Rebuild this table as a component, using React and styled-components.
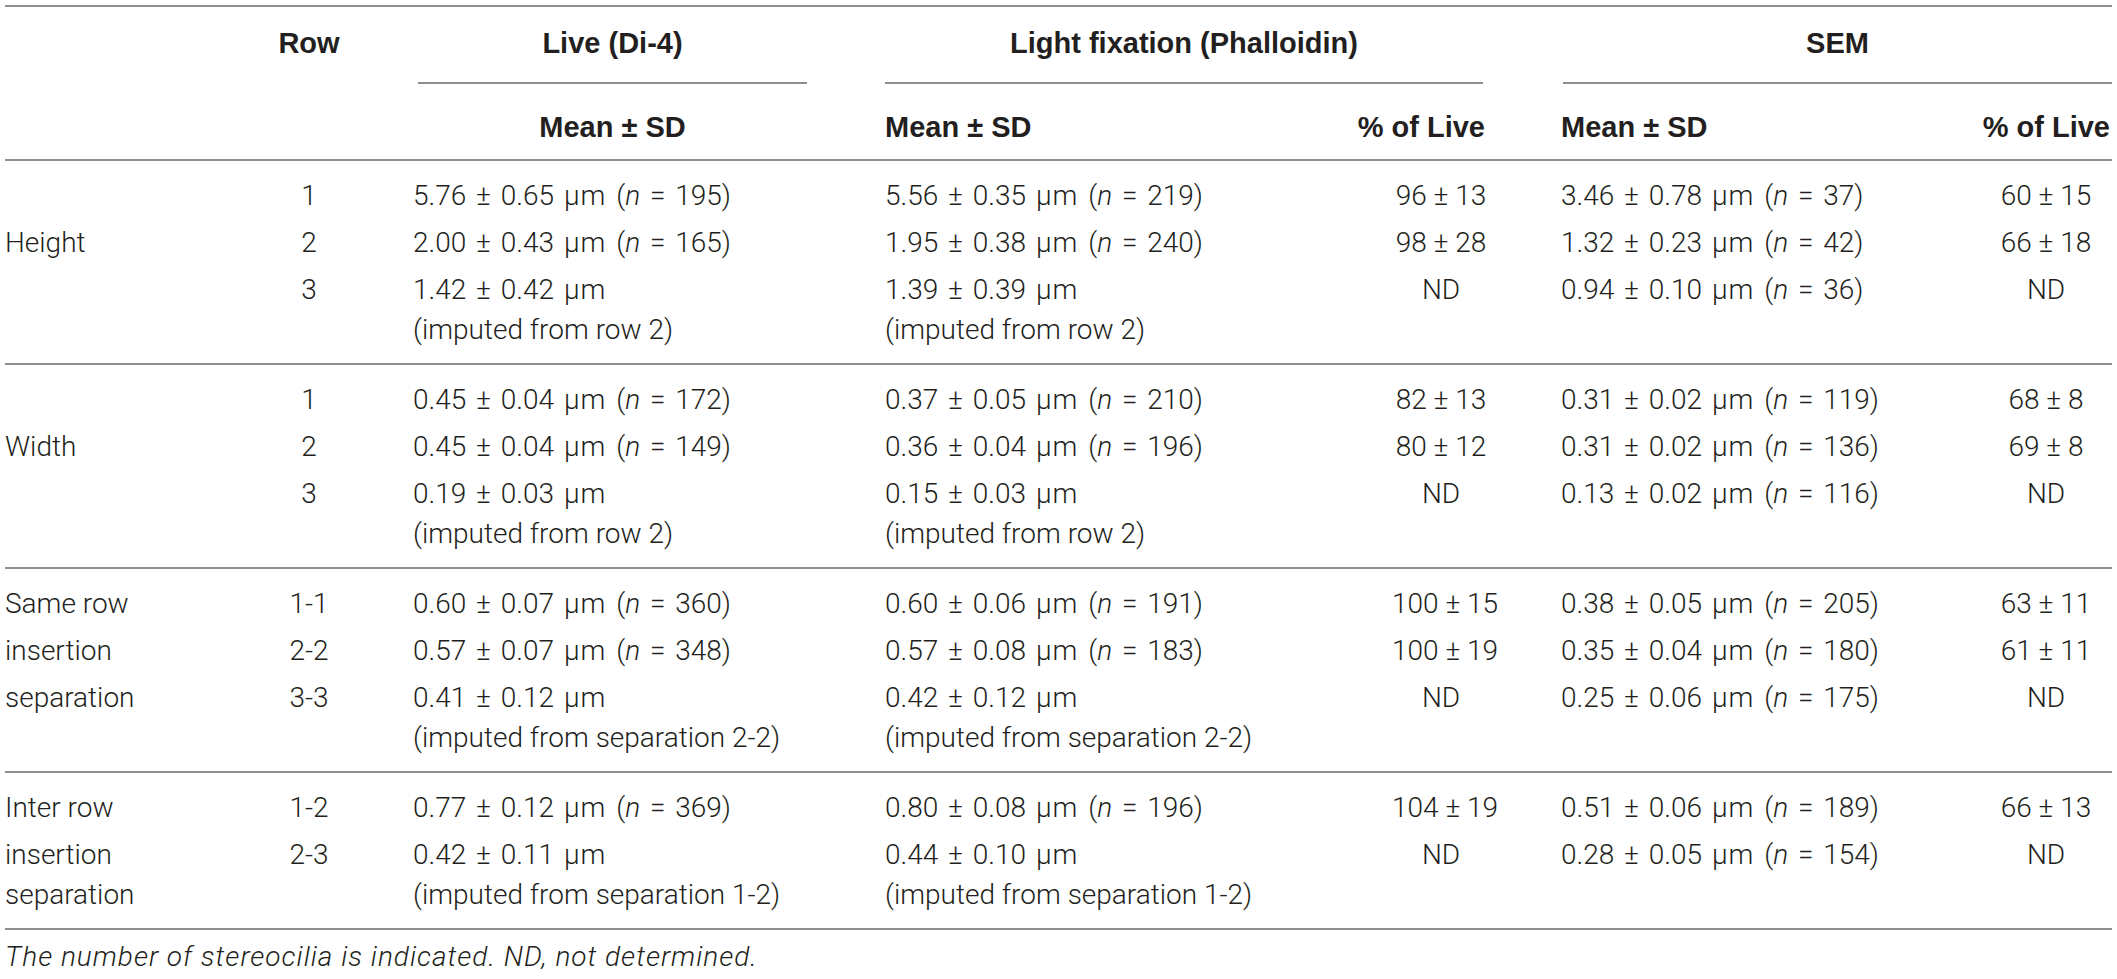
import React from 'react';
import styled, { createGlobalStyle } from 'styled-components';

const GlobalStyle = createGlobalStyle`
  html, body { margin: 0; padding: 0; background: #ffffff; }
  body {
    font-family: Roboto, "Liberation Sans", Arial, sans-serif;
    color: #231f20;
  }
`;

const COLS = '245px 118px 489px 483px 150px 485px 137px';
const RULE = '2px solid #8e8e8e';

const Page = styled.div`
  padding: 5px 5px 0 5px;
  width: 2107px;
`;

const Table = styled.div`
  border-top: ${RULE};
`;

const HeadRow = styled.div`
  display: grid;
  grid-template-columns: ${COLS};
  font-family: "Liberation Sans", Arial, sans-serif;
  font-size: 29px;
  font-weight: 700;
  line-height: 40px;
  padding: ${(p) => (p.$second ? '23px 0 12px' : '16px 0 0')};
  border-bottom: ${(p) => (p.$second ? RULE : 'none')};
`;

const HeadCell = styled.div`
  grid-column: ${(p) => p.$col} / span ${(p) => p.$span || 1};
  text-align: ${(p) => p.$align || 'left'};
  padding-left: ${(p) => p.$pl || 0}px;
  padding-right: ${(p) => p.$pr || 0}px;
  white-space: nowrap;
`;

const HeadGroup = styled.div`
  grid-column: ${(p) => p.$col} / span ${(p) => p.$span || 1};
  text-align: center;
  margin-left: ${(p) => p.$ml}px;
  margin-right: ${(p) => p.$mr}px;
  padding-bottom: 19px;
  border-bottom: ${RULE};
`;

const Group = styled.div`
  padding: 11px 0 10px;
  border-bottom: ${RULE};
`;

const Row = styled.div`
  display: grid;
  grid-template-columns: ${COLS};
  font-size: 28px;
  font-weight: 300;
  line-height: 40px;
  padding: 4px 0 3px;
`;

const Label = styled.div`
  white-space: pre-line;
`;

const RowNum = styled.div`
  text-align: center;
`;

const Value = styled.div`
  padding-left: ${(p) => p.$pl}px;
  white-space: nowrap;
`;

const MainLine = styled.span`
  word-spacing: 3px;
`;

const Mu = styled.span`
  letter-spacing: 1px;
`;

const Percent = styled.div`
  text-align: center;
  padding-left: ${(p) => p.$pl}px;
  white-space: nowrap;
`;

const Note = styled.p`
  margin: 0;
  padding-top: 7px;
  font-size: 28px;
  font-weight: 300;
  line-height: 40px;
  font-style: italic;
  letter-spacing: 1px;
`;

const m = (mean, sd, n) => ({ mean, sd, n });
const imp = (mean, sd, src) => ({ mean, sd, src });

const groups = [
  [
    { label: '', row: '1', live: m('5.76', '0.65', '195'), light: m('5.56', '0.35', '219'), lp: '96 ± 13', sem: m('3.46', '0.78', '37'), sp: '60 ± 15' },
    { label: 'Height', row: '2', live: m('2.00', '0.43', '165'), light: m('1.95', '0.38', '240'), lp: '98 ± 28', sem: m('1.32', '0.23', '42'), sp: '66 ± 18' },
    { label: '', row: '3', live: imp('1.42', '0.42', 'row 2'), light: imp('1.39', '0.39', 'row 2'), lp: 'ND', sem: m('0.94', '0.10', '36'), sp: 'ND' },
  ],
  [
    { label: '', row: '1', live: m('0.45', '0.04', '172'), light: m('0.37', '0.05', '210'), lp: '82 ± 13', sem: m('0.31', '0.02', '119'), sp: '68 ± 8' },
    { label: 'Width', row: '2', live: m('0.45', '0.04', '149'), light: m('0.36', '0.04', '196'), lp: '80 ± 12', sem: m('0.31', '0.02', '136'), sp: '69 ± 8' },
    { label: '', row: '3', live: imp('0.19', '0.03', 'row 2'), light: imp('0.15', '0.03', 'row 2'), lp: 'ND', sem: m('0.13', '0.02', '116'), sp: 'ND' },
  ],
  [
    { label: 'Same row', row: '1-1', live: m('0.60', '0.07', '360'), light: m('0.60', '0.06', '191'), lp: '100 ± 15', sem: m('0.38', '0.05', '205'), sp: '63 ± 11' },
    { label: 'insertion', row: '2-2', live: m('0.57', '0.07', '348'), light: m('0.57', '0.08', '183'), lp: '100 ± 19', sem: m('0.35', '0.04', '180'), sp: '61 ± 11' },
    { label: 'separation', row: '3-3', live: imp('0.41', '0.12', 'separation 2-2'), light: imp('0.42', '0.12', 'separation 2-2'), lp: 'ND', sem: m('0.25', '0.06', '175'), sp: 'ND' },
  ],
  [
    { label: 'Inter row', row: '1-2', live: m('0.77', '0.12', '369'), light: m('0.80', '0.08', '196'), lp: '104 ± 19', sem: m('0.51', '0.06', '189'), sp: '66 ± 13' },
    { label: 'insertion\nseparation', row: '2-3', live: imp('0.42', '0.11', 'separation 1-2'), light: imp('0.44', '0.10', 'separation 1-2'), lp: 'ND', sem: m('0.28', '0.05', '154'), sp: 'ND' },
  ],
];

function Measure({ v, pl }) {
  return (
    <Value $pl={pl}>
      <MainLine>
        {v.mean} ± {v.sd} <Mu>μm</Mu>
        {v.n ? (
          <>
            {' ('}
            <i>n</i>
            {' = '}
            {v.n})
          </>
        ) : null}
      </MainLine>
      {v.n ? null : (
        <>
          <br />
          (imputed from {v.src})
        </>
      )}
    </Value>
  );
}

export default function App() {
  return (
    <>
      <GlobalStyle />
      <Page>
        <Table>
          <HeadRow>
            <HeadCell $col={2} $align="center">Row</HeadCell>
            <HeadGroup $col={3} $ml={50} $mr={50}>Live (Di-4)</HeadGroup>
            <HeadGroup $col={4} $span={2} $ml={28} $mr={7}>Light fixation (Phalloidin)</HeadGroup>
            <HeadGroup $col={6} $span={2} $ml={73} $mr={0}>SEM</HeadGroup>
          </HeadRow>
          <HeadRow $second>
            <HeadCell $col={3} $align="center" $pl={45} $pr={45}>Mean ± SD</HeadCell>
            <HeadCell $col={4} $pl={28}>Mean ± SD</HeadCell>
            <HeadCell $col={5} $align="right" $pr={5}>% of Live</HeadCell>
            <HeadCell $col={6} $pl={71}>Mean ± SD</HeadCell>
            <HeadCell $col={7} $align="right" $pr={2}>% of Live</HeadCell>
          </HeadRow>
          {groups.map((rows, gi) => (
            <Group key={gi}>
              {rows.map((r, ri) => (
                <Row key={ri}>
                  <Label>{r.label}</Label>
                  <RowNum>{r.row}</RowNum>
                  <Measure v={r.live} pl={45} />
                  <Measure v={r.light} pl={28} />
                  <Percent $pl={52}>{r.lp}</Percent>
                  <Measure v={r.sem} pl={71} />
                  <Percent $pl={5}>{r.sp}</Percent>
                </Row>
              ))}
            </Group>
          ))}
        </Table>
        <Note>The number of stereocilia is indicated. ND, not determined.</Note>
      </Page>
    </>
  );
}
